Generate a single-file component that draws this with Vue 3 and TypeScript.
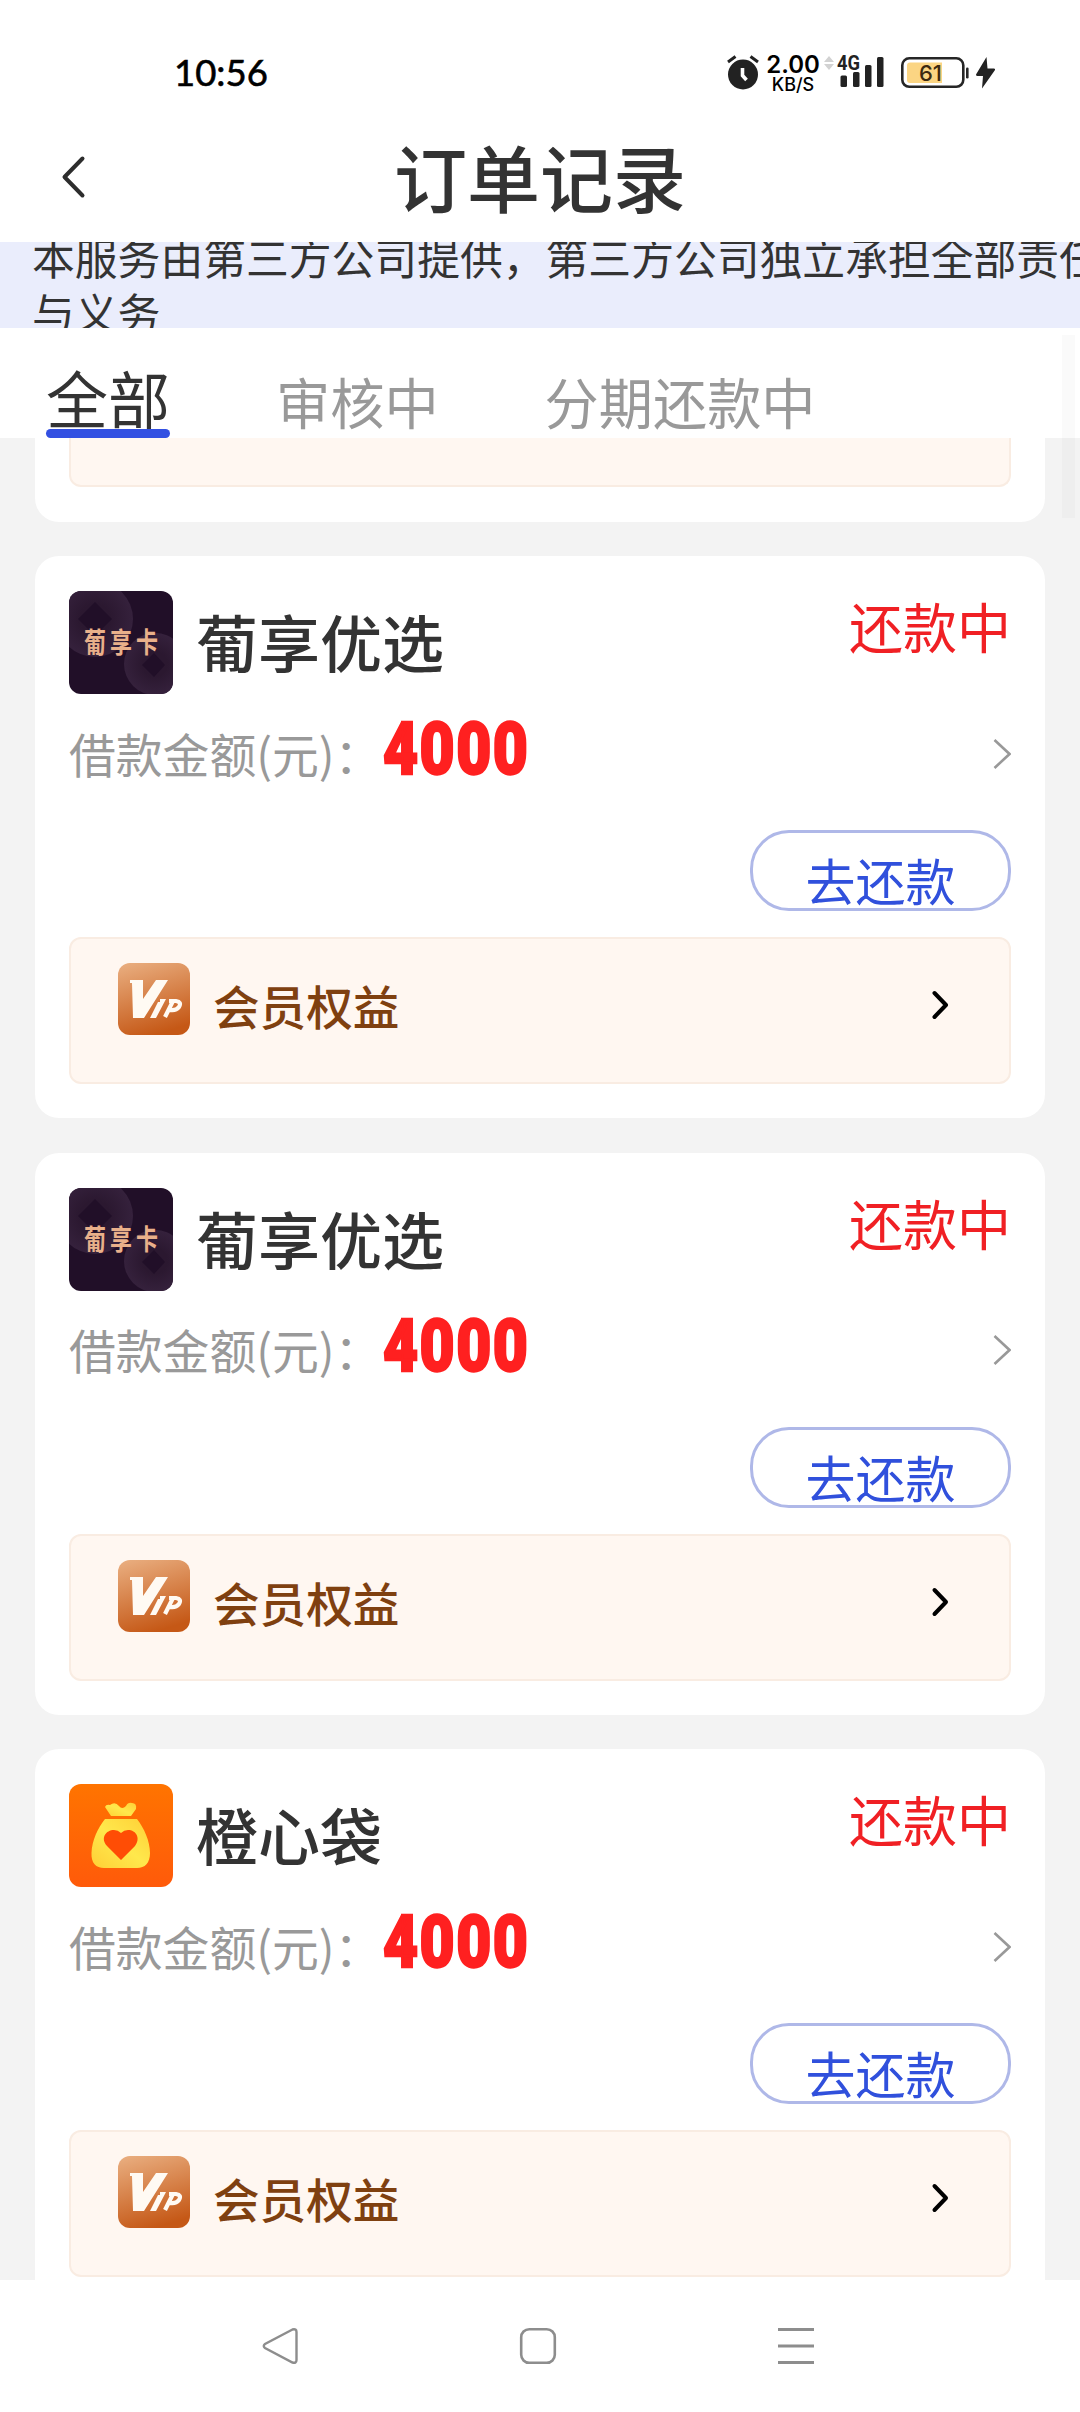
<script setup lang="ts">
interface Order {
  id: number
  name: string
  logo: 'grape' | 'bag'
  status: string
  amount: string
}

const tabs: string[] = ['全部', '审核中', '分期还款中']
const activeTab = 0

const orders: Order[] = [
  { id: 1, name: '葡享优选', logo: 'grape', status: '还款中', amount: '4000' },
  { id: 2, name: '葡享优选', logo: 'grape', status: '还款中', amount: '4000' },
  { id: 3, name: '橙心袋', logo: 'bag', status: '还款中', amount: '4000' },
]
</script>

<template>
  <div class="screen">
    <header class="status-bar">
      <span class="clock">10:56</span>
      <div class="status-icons">
        <svg class="alarm" width="34" height="36" viewBox="0 0 34 36">
          <circle cx="17" cy="20.500" r="15" fill="#222" />
          <path d="M2 8L9.500 2.500M32 8L24.500 2.500" stroke="#222" stroke-width="3" fill="none" />
          <path d="M16.500 14V21.500L20.500 26" stroke="#fff" stroke-width="3.600" fill="none" />
        </svg>
        <div class="speed">
          <span class="speed-value">2.00</span>
          <span class="speed-unit">KB/S</span>
        </div>
        <svg class="signal" width="62" height="36" viewBox="0 0 62 36">
          <path d="M6 2L11 8H1ZM6 16L1 10H11Z" fill="#d2d2d2" />
          <text x="14" y="16" class="net" textLength="23" lengthAdjust="spacingAndGlyphs">4G</text>
          <g fill="#222">
            <rect x="17.500" y="21.500" width="6.500" height="11.500" rx="1.500" />
            <rect x="30" y="18" width="6.500" height="15" rx="1.500" />
            <rect x="42" y="11" width="6.500" height="22" rx="1.500" />
            <rect x="54" y="3" width="6.500" height="30" rx="1.500" />
          </g>
        </svg>
        <svg class="battery" width="68" height="32" viewBox="0 0 68 32">
          <rect x="1.300" y="1.300" width="61" height="28.500" rx="7" fill="#fff" stroke="#262626" stroke-width="2.600" />
          <path d="M9 5.500H41V26H9Q6 26 6 23V8.500Q6 5.500 9 5.500Z" fill="#fbd583" />
          <rect x="65" y="10.500" width="2.600" height="11" rx="1.300" fill="#262626" />
          <text x="29.500" y="23.500" text-anchor="middle" class="percent">61</text>
        </svg>
        <svg class="bolt" width="20" height="32" viewBox="0 0 20 32">
          <path d="M10.500 0L0 17.500Q0 19 1.500 19H7L6 31.500L19 13Q19.500 11.500 18 11.500H11.500Z" fill="#222" />
        </svg>
      </div>
    </header>

    <div class="title-bar">
      <svg class="back" width="28" height="46" viewBox="0 0 28 46">
        <path d="M22.500 4.500L4.500 23L22.500 41.500" fill="none" stroke="#2d2d2d" stroke-width="4" stroke-linecap="round" stroke-linejoin="round" />
      </svg>
      <h1 class="title">订单记录</h1>
    </div>

    <div class="notice">
      <p>本服务由第三方公司提供，第三方公司独立承担全部责任<br />与义务</p>
    </div>

    <nav class="tabs">
      <div v-for="(tab, i) in tabs" :key="tab" class="tab" :class="{ active: i === activeTab }">{{ tab }}</div>
    </nav>

    <main class="list">
      <section class="card card-tail">
        <div class="benefit benefit-tail"></div>
      </section>

      <section v-for="order in orders" :key="order.id" class="card">
        <div class="card-head">
          <svg v-if="order.logo === 'grape'" class="logo" width="104" height="103" viewBox="0 0 104 103">
            <defs>
              <radialGradient id="ringA"><stop offset="0.4" stop-color="#2b1830" /><stop offset="1" stop-color="#35213c" /></radialGradient>
            </defs>
            <rect width="104" height="103" fill="#210f28" />
            <circle cx="26" cy="28" r="38" fill="url(#ringA)" />
            <path d="M26 11L43 28L26 45L9 28Z" fill="#210f28" />
            <circle cx="86" cy="73" r="31" fill="url(#ringA)" />
            <path d="M85 62L96 74L85 86L73 74Z" fill="#210f28" />
            <text x="15" y="62" class="logo-text" transform="translate(0 -18.500) scale(1 1.300)">葡享卡</text>
          </svg>
          <svg v-else class="logo" width="104" height="103" viewBox="0 0 104 103">
            <defs>
              <linearGradient id="orange" x1="0" y1="0" x2="0" y2="1"><stop offset="0" stop-color="#ff7400" /><stop offset="1" stop-color="#ff5a0a" /></linearGradient>
              <linearGradient id="gold" x1="1" y1="0" x2="0" y2="1"><stop offset="0" stop-color="#ffcf36" /><stop offset="0.500" stop-color="#ffe84c" /><stop offset="1" stop-color="#ffcf36" /></linearGradient>
            </defs>
            <rect width="104" height="103" fill="url(#orange)" />
            <path d="M42 32L36 23Q37 20 41 21Q46 17 50 22Q53 26 57 22Q59 18 63 19Q68 19 67 25L62 32Z" fill="url(#gold)" />
            <path d="M36 35H68C75 44 81 57 81 69C81 79 76 84 68 84H35C27 84 22 79 22.500 69C23 56 29 44 36 35Z" fill="url(#gold)" />
            <path d="M52 76L38 62C31 54 37 46 45 46Q49 46 52 49Q55 46 59 46C67 46 72 54 66 62Z" fill="#ff4d05" />
          </svg>
          <span class="name">{{ order.name }}</span>
          <span class="state">{{ order.status }}</span>
        </div>

        <div class="amount-row">
          <span class="label">借款金额(元)：</span>
          <span class="amount">{{ order.amount }}</span>
          <svg class="more" width="19" height="32" viewBox="0 0 19 32">
            <path d="M2.500 2L17.500 16L2.500 30" fill="none" stroke="#999" stroke-width="2.600" />
          </svg>
        </div>

        <div class="action-row">
          <button type="button" class="repay">去还款</button>
        </div>

        <div class="benefit">
          <svg class="vip" width="72" height="72" viewBox="0 0 72 72">
            <defs>
              <linearGradient id="copper" x1="0.200" y1="0" x2="0.500" y2="1"><stop offset="0" stop-color="#e8ab7c" /><stop offset="1" stop-color="#c55816" /></linearGradient>
            </defs>
            <rect width="72" height="72" rx="12" fill="url(#copper)" />
            <path d="M12 17H25V36L38 17H50L26 55H15L14 20H12Z" fill="#fffaf3" />
            <path d="M42 36H48L38 55H32L40 39H42Z" fill="#fffaf3" />
            <path d="M51 38H58Q64 39 61 44Q58 48 52 47H49M55 38L47 54" fill="none" stroke="#fffaf3" stroke-width="4.200" />
          </svg>
          <span class="benefit-text">会员权益</span>
          <svg class="go" width="20" height="32" viewBox="0 0 20 32">
            <path d="M3.500 4L15 16L3.500 28" fill="none" stroke="#000" stroke-width="4" stroke-linecap="round" stroke-linejoin="round" />
          </svg>
        </div>
      </section>
    </main>

    <div class="scrollbar"></div>

    <footer class="nav">
      <svg width="38" height="40" viewBox="0 0 38 40">
        <path d="M31.500 3.500L4 18Q1.500 20 4 22L31.500 36.500Q35.500 37.500 35.500 34V6Q35.500 2.500 31.500 3.500Z" fill="none" stroke="#8d8d8d" stroke-width="2.400" />
      </svg>
      <svg width="38" height="40" viewBox="0 0 38 40">
        <rect x="2.200" y="3.200" width="33.600" height="33.600" rx="8" fill="none" stroke="#8d8d8d" stroke-width="2.600" />
      </svg>
      <svg width="38" height="40" viewBox="0 0 38 40">
        <path d="M1 3.500H37M1 20H37M1 36.500H37" stroke="#8d8d8d" stroke-width="2.800" />
      </svg>
    </footer>
  </div>
</template>

<style>
body {
  margin: 0;
}
</style>

<style scoped>
.screen {
  position: relative;
  width: 1080px;
  height: 2412px;
  display: flex;
  flex-direction: column;
  overflow: hidden;
  background: #f3f3f3;
  font-family: "Noto Sans CJK SC", sans-serif;
  color: #333;
}

svg {
  display: block;
  flex: none;
}

.status-bar {
  height: 120px;
  flex: none;
  display: flex;
  justify-content: space-between;
  box-sizing: border-box;
  padding: 0 84px 0 174px;
  background: #fff;
}

.clock {
  padding-top: 50px;
  font: 400 36.500px/45px Lato, sans-serif;
  color: #000;
  -webkit-text-stroke: 0.600px #000;
}

.status-icons {
  display: flex;
  padding-top: 54px;
}

.speed {
  width: 54px;
  margin-left: 6px;
  display: flex;
  flex-direction: column;
  align-items: center;
  font-family: Inter, sans-serif;
  color: #000;
}

.speed-value {
  font-size: 24px;
  font-weight: 600;
  line-height: 21px;
}

.speed-unit {
  font-size: 18px;
  line-height: 19px;
  font-weight: 500;
}

.net {
  font: 700 20px Roboto, sans-serif;
  fill: #222;
}

.signal {
  margin-left: 3px;
}

.battery {
  margin: 3px 0 0 16px;
}

.percent {
  font: 500 22px Inter, sans-serif;
  fill: #3c2a10;
}

.bolt {
  margin: 3px 0 0 7px;
}

.title-bar {
  height: 122px;
  flex: none;
  display: flex;
  align-items: center;
  box-sizing: border-box;
  padding: 0 60px 12px;
  background: #fff;
}

.back {
  margin-top: 4px;
}

.title {
  flex: 1;
  margin: 0 28px 0 0;
  text-align: center;
  font-size: 73px;
  font-weight: 500;
  line-height: 100px;
}

.notice {
  height: 86px;
  flex: none;
  overflow: hidden;
  background: #eaedfc;
}

.notice p {
  margin: -13px 0 0 32px;
  font-size: 42.800px;
  line-height: 55px;
  white-space: nowrap;
}

.tabs {
  height: 110px;
  flex: none;
  display: flex;
  align-items: flex-end;
  padding-left: 46px;
  background: #fff;
}

.tab {
  height: 88px;
  margin-right: 106px;
  font-size: 54.200px;
  line-height: 101px;
  color: #999;
}

.tab.active {
  font-size: 62px;
  line-height: 95px;
  color: #333;
}

.tab.active::after {
  content: "";
  display: block;
  height: 9px;
  margin-top: -16px;
  border-radius: 5px;
  background: #3350e2;
}

.list {
  height: 1842px;
  flex: none;
  overflow: hidden;
}

.card {
  box-sizing: border-box;
  width: 1010px;
  height: 562px;
  margin: 0 auto 34.500px;
  padding: 35px 34px 0;
  border-radius: 24px;
  background: #fff;
}

.card-tail {
  height: 84px;
  margin-bottom: 34px;
  padding-top: 0;
  border-radius: 0 0 24px 24px;
}

.card-head {
  height: 104px;
  display: flex;
}

.logo {
  border-radius: 12px;
}

.logo-text {
  font: 700 22px "Noto Sans CJK SC", sans-serif;
  letter-spacing: 4px;
  fill: #e9b08a;
}

.name {
  margin-left: 23px;
  font-size: 62px;
  font-weight: 500;
  line-height: 101px;
}

.state {
  margin-left: auto;
  font-size: 54px;
  line-height: 70px;
  color: #f02024;
}

.amount-row {
  height: 117px;
  display: flex;
  align-items: center;
}

.label {
  font-size: 46.800px;
  line-height: 60px;
  padding-bottom: 2px;
  color: #999;
}

.amount {
  width: 146px;
  margin-left: 2px;
  font: 900 73px/80px Roboto, sans-serif;
  letter-spacing: 1.800px;
  color: #ff2020;
  -webkit-text-stroke: 2.400px #ff2020;
  padding-bottom: 9px;
  transform: scaleX(0.830);
  transform-origin: 0 50%;
}

.more {
  margin-left: auto;
}

.action-row {
  height: 125px;
  display: flex;
  justify-content: flex-end;
  padding-top: 18px;
  box-sizing: border-box;
}

.repay {
  box-sizing: border-box;
  width: 261px;
  height: 81px;
  padding: 0;
  border: 3px solid #afb8e8;
  border-radius: 39px;
  background: #fff;
  font: 400 50px/93px "Noto Sans CJK SC", sans-serif;
  color: #3050dc;
}

.benefit {
  box-sizing: border-box;
  height: 147px;
  display: flex;
  padding: 24px 58px 0 47px;
  border: 2px solid #f9ece2;
  border-radius: 12px;
  background: #fff7f1;
}

.benefit-tail {
  height: 49px;
  border-top: 0;
  border-radius: 0 0 12px 12px;
}

.benefit-text {
  margin-left: 23px;
  font-size: 46.600px;
  font-weight: 500;
  line-height: 84px;
  color: #7f4010;
}

.go {
  margin: 26px 0 0 auto;
}

.scrollbar {
  position: absolute;
  top: 335px;
  right: 5px;
  width: 13px;
  height: 183px;
  background: rgba(0, 0, 0, 0.020);
}

.nav {
  height: 132px;
  flex: none;
  display: flex;
  justify-content: space-between;
  box-sizing: border-box;
  padding: 46px 265px 0 261px;
  background: #fff;
}
</style>
